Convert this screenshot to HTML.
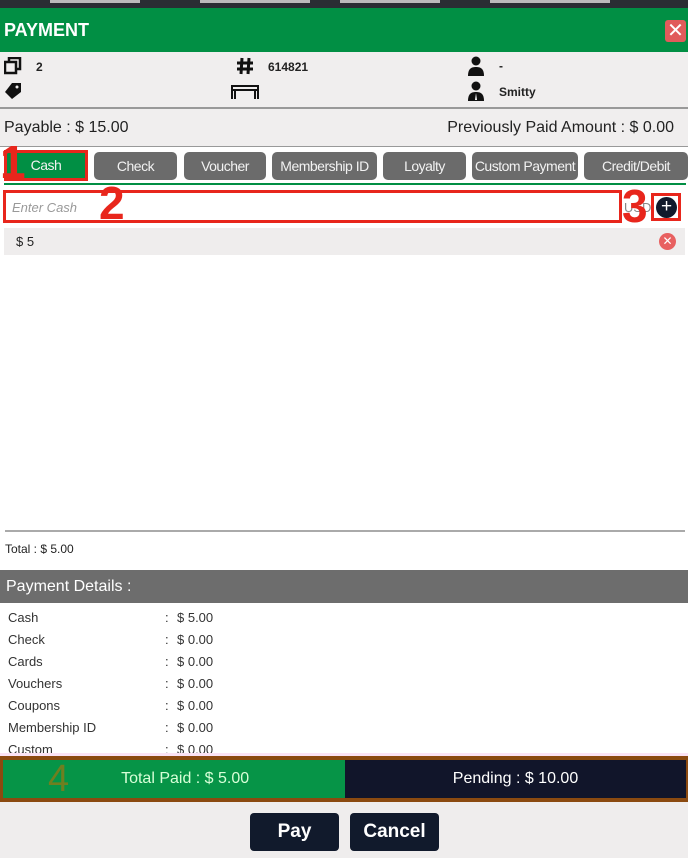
<!DOCTYPE html>
<html><head><meta charset="utf-8"><style>
*{margin:0;padding:0;box-sizing:border-box}
body{width:688px;height:858px;position:relative;overflow:hidden;background:#fff;font-family:"Liberation Sans",sans-serif;color:#222}
.a{position:absolute}
.btn{position:absolute;top:152px;height:28px;background:#6b6b6b;color:#f2f2f2;border-radius:5px;font-size:14px;text-align:center;line-height:28px;letter-spacing:-0.5px;white-space:nowrap;overflow:hidden}
.num{position:absolute;color:#e8261c;font-weight:bold;font-size:46px;line-height:1}
.row{position:absolute;left:8px;font-size:13px;color:#333}
.row span{position:absolute;white-space:nowrap}
</style></head><body>
<div class="a" style="left:0;top:0;width:688px;height:8px;background:#2a2d33"></div>
<div class="a" style="left:50px;top:0;width:90px;height:3px;background:#bbb"></div>
<div class="a" style="left:200px;top:0;width:110px;height:3px;background:#bbb"></div>
<div class="a" style="left:340px;top:0;width:100px;height:3px;background:#bbb"></div>
<div class="a" style="left:490px;top:0;width:120px;height:3px;background:#bbb"></div>
<div class="a" style="left:0;top:8px;width:688px;height:44px;background:#018f44"></div>
<div class="a" style="left:4px;top:20px;color:#fff;font-weight:bold;font-size:18px">PAYMENT</div>
<div class="a" style="left:665px;top:20px;width:21px;height:22px;background:#e15b5b;border-radius:3px;color:#fff;font-size:20px;line-height:22px;text-align:center">✕</div>
<div class="a" style="left:0;top:52px;width:688px;height:55px;background:#f0eeee"></div>
<svg class="a" style="left:4px;top:57px" width="18" height="18" viewBox="0 0 18 18"><rect x="5" y="1" width="11" height="11" fill="none" stroke="#111" stroke-width="2.5"/><rect x="1" y="5" width="11" height="11" fill="#f0eeee" stroke="#111" stroke-width="2.5"/></svg>
<div class="a" style="left:36px;top:60px;font-size:12px;font-weight:bold">2</div>
<svg class="a" style="left:4px;top:82px" width="18" height="18" viewBox="0 0 18 18"><path d="M8 1H17V10L8 17L1 10Z" fill="#111"/><circle cx="13" cy="5" r="1.5" fill="#f0eeee"/></svg>
<svg class="a" style="left:236px;top:57px" width="18" height="18" viewBox="0 0 18 18"><path d="M6 1L5 17M13 1L12 17M1 6H17M1 12H17" stroke="#111" stroke-width="3" fill="none"/></svg>
<div class="a" style="left:268px;top:60px;font-size:12px;font-weight:bold">614821</div>
<svg class="a" style="left:230px;top:82px" width="30" height="18" viewBox="0 0 30 18"><path d="M2 17V4H28V17M2 8H28M5 8V17M25 8V17" fill="none" stroke="#111" stroke-width="2"/></svg>
<svg class="a" style="left:467px;top:56px" width="18" height="20" viewBox="0 0 18 20"><circle cx="9" cy="5" r="4.5" fill="#111"/><path d="M1 20C1 13 4 11 9 11S17 13 17 20Z" fill="#111"/></svg>
<div class="a" style="left:499px;top:59px;font-size:12px;font-weight:bold">-</div>
<svg class="a" style="left:467px;top:81px" width="18" height="20" viewBox="0 0 18 20"><circle cx="9" cy="5" r="4.5" fill="#111"/><path d="M1 20C1 13 4 11 9 11S17 13 17 20Z" fill="#111"/><path d="M9 12L8 19L10 19Z" fill="#fff"/></svg>
<div class="a" style="left:499px;top:85px;font-size:12px;font-weight:bold">Smitty</div>
<div class="a" style="left:0;top:107px;width:688px;height:2px;background:#999"></div>
<div class="a" style="left:0;top:109px;width:688px;height:37px;background:#f0eeee"></div>
<div class="a" style="left:4px;top:119px;font-size:16px">Payable : $ 15.00</div>
<div class="a" style="right:14px;top:119px;font-size:16px">Previously Paid Amount : $ 0.00</div>
<div class="a" style="left:0;top:146px;width:688px;height:1px;background:#999"></div>
<div class="btn" style="left:4px;width:84px;background:#018f44;border:3px solid #e8261c;border-radius:0;line-height:25px;top:150px;height:31px">Cash</div>
<div class="btn" style="left:94px;width:83px">Check</div>
<div class="btn" style="left:184px;width:82px">Voucher</div>
<div class="btn" style="left:272px;width:105px">Membership ID</div>
<div class="btn" style="left:383px;width:83px">Loyalty</div>
<div class="btn" style="left:472px;width:106px">Custom Payment</div>
<div class="btn" style="left:584px;width:104px">Credit/Debit</div>
<div class="num" style="left:0px;top:139px">1</div>
<div class="a" style="left:4px;top:183px;width:682px;height:2px;background:#018f44"></div>
<div class="a" style="left:3px;top:190px;width:619px;height:33px;border:3px solid #e8261c;background:#fff"></div>
<div class="a" style="left:12px;top:200px;font-size:13px;font-style:italic;color:#999">Enter Cash</div>
<div class="num" style="left:99px;top:180px">2</div>
<div class="a" style="left:624px;top:200px;font-size:13px;color:#888">USD</div>
<div class="num" style="left:622px;top:183px">3</div>
<div class="a" style="left:651px;top:193px;width:30px;height:28px;border:3px solid #e8261c"></div>
<div class="a" style="left:656px;top:197px;width:21px;height:21px;border-radius:50%;background:#111a2c;color:#fff;font-size:19px;line-height:20px;text-align:center">+</div>
<div class="a" style="left:4px;top:228px;width:681px;height:27px;background:#efeded"></div>
<div class="a" style="left:16px;top:234px;font-size:13px">$ 5</div>
<div class="a" style="left:659px;top:233px;width:17px;height:17px;border-radius:50%;background:#e86060;color:#fff;font-size:12px;line-height:17px;text-align:center">✕</div>
<div class="a" style="left:5px;top:530px;width:680px;height:2px;background:#aaa"></div>
<div class="a" style="left:5px;top:542px;font-size:12px">Total : $ 5.00</div>
<div class="a" style="left:0;top:570px;width:688px;height:33px;background:#6d6d6d"></div>
<div class="a" style="left:6px;top:578px;font-size:16px;color:#fff">Payment Details :</div>
<div class="row" style="top:610px"><span>Cash</span><span style="left:157px">:</span><span style="left:169px">$ 5.00</span></div>
<div class="row" style="top:632px"><span>Check</span><span style="left:157px">:</span><span style="left:169px">$ 0.00</span></div>
<div class="row" style="top:654px"><span>Cards</span><span style="left:157px">:</span><span style="left:169px">$ 0.00</span></div>
<div class="row" style="top:676px"><span>Vouchers</span><span style="left:157px">:</span><span style="left:169px">$ 0.00</span></div>
<div class="row" style="top:698px"><span>Coupons</span><span style="left:157px">:</span><span style="left:169px">$ 0.00</span></div>
<div class="row" style="top:720px"><span>Membership ID</span><span style="left:157px">:</span><span style="left:169px">$ 0.00</span></div>
<div class="row" style="top:742px"><span>Custom</span><span style="left:157px">:</span><span style="left:169px">$ 0.00</span></div>
<div class="a" style="left:0;top:753px;width:688px;height:3px;background:#fbe3f5"></div>
<div class="a" style="left:0;top:756px;width:688px;height:46px;background:#8b4a10"></div>
<div class="a" style="left:3px;top:760px;width:342px;height:38px;background:#069447"></div>
<div class="a" style="left:345px;top:760px;width:341px;height:38px;background:#11152a"></div>
<div class="a" style="left:48px;top:760px;font-size:38px;color:#6f7f20;line-height:1">4</div>
<div class="a" style="left:3px;top:770px;width:342px;text-align:center;color:#d8ffd8;font-size:16px">&nbsp;&nbsp;&nbsp;&nbsp;&nbsp;Total Paid : $ 5.00</div>
<div class="a" style="left:345px;top:770px;width:341px;text-align:center;color:#fff;font-size:16px">Pending : $ 10.00</div>
<div class="a" style="left:0;top:802px;width:688px;height:56px;background:#efeded"></div>
<div class="a" style="left:250px;top:813px;width:89px;height:38px;background:#111a2c;border-radius:4px;color:#fff;font-size:19px;font-weight:bold;text-align:center;line-height:38px">Pay</div>
<div class="a" style="left:350px;top:813px;width:89px;height:38px;background:#111a2c;border-radius:4px;color:#fff;font-size:19px;font-weight:bold;text-align:center;line-height:38px">Cancel</div>
</body></html>
